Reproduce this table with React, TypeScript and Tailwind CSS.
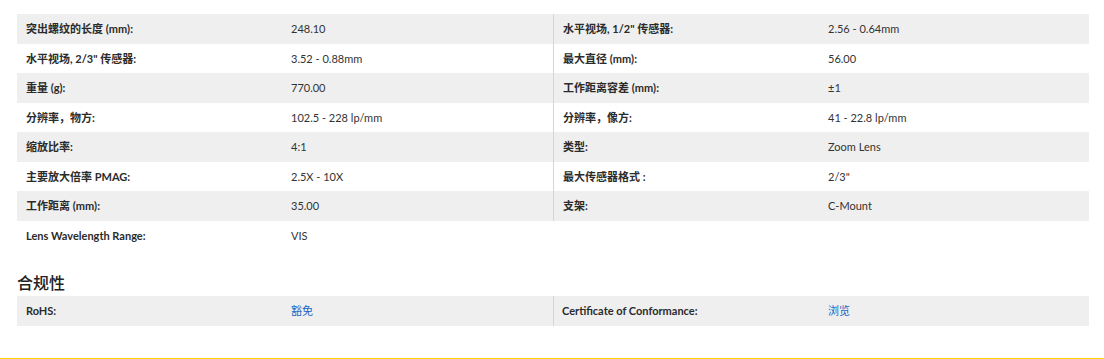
import React from "react";

type Row = { label: string; value: string; link?: boolean };

const left: Row[] = [
  { label: "突出螺纹的长度 (mm):", value: "248.10" },
  { label: "水平视场, 2/3\" 传感器:", value: "3.52 - 0.88mm" },
  { label: "重量 (g):", value: "770.00" },
  { label: "分辨率，物方:", value: "102.5 - 228 lp/mm" },
  { label: "缩放比率:", value: "4:1" },
  { label: "主要放大倍率 PMAG:", value: "2.5X - 10X" },
  { label: "工作距离 (mm):", value: "35.00" },
  { label: "Lens Wavelength Range:", value: "VIS" },
];

const right: Row[] = [
  { label: "水平视场, 1/2\" 传感器:", value: "2.56 - 0.64mm" },
  { label: "最大直径 (mm):", value: "56.00" },
  { label: "工作距离容差 (mm):", value: "±1" },
  { label: "分辨率，像方:", value: "41 - 22.8 lp/mm" },
  { label: "类型:", value: "Zoom Lens" },
  { label: "最大传感器格式 :", value: "2/3\"" },
  { label: "支架:", value: "C-Mount" },
];

function Table({ rows, border }: { rows: Row[]; border?: boolean }) {
  return (
    <div className={border ? "w-[536px] self-start border-l border-[#d6d6d6]" : "w-[536px]"}>
      {rows.map((r, i) => (
        <div
          key={i}
          className={
            "flex h-[29.5px] items-center " + (i % 2 === 0 ? "bg-[#efefef]" : "bg-white")
          }
        >
          <div className={(border ? "w-[274px]" : "w-[274px]") + " pl-[9px] font-bold text-[#2b2b2b]"}>
            {r.label}
          </div>
          <div className={r.link ? "text-[#1a66c4]" : "text-[#333333]"}>{r.value}</div>
        </div>
      ))}
    </div>
  );
}

export default function App() {
  return (
    <div
      className="relative h-[359px] w-[1104px] bg-white text-[11px] leading-none"
      style={{ fontFamily: "Lato, 'Noto Sans CJK SC', sans-serif" }}
    >
      <div className="ml-[17px] w-[1072px] pt-[14px]">
        <div className="flex">
          <Table rows={left} />
          <Table rows={right} border />
        </div>
        <div className="mt-[21px] h-[24px] text-[16px] leading-[24px] font-medium text-[#222222]">
          合规性
        </div>
        <div className="mt-[1px] flex bg-[#efefef]">
          <div className="w-[536px]">
            <div className="flex h-[29.5px] items-center">
              <div className="w-[274px] pl-[9px] font-bold text-[#2b2b2b]">RoHS:</div>
              <div className="text-[#1a66c4]">豁免</div>
            </div>
          </div>
          <div className="w-[536px] border-l border-[#d6d6d6]">
            <div className="flex h-[29.5px] items-center">
              <div className="w-[274px] pl-[8px] font-bold text-[#2b2b2b]">
                Certificate of Conformance:
              </div>
              <div className="text-[#1a66c4]">浏览</div>
            </div>
          </div>
        </div>
      </div>
      <div className="absolute bottom-0 left-0 h-[1px] w-full bg-[#ffd400]" />
    </div>
  );
}
